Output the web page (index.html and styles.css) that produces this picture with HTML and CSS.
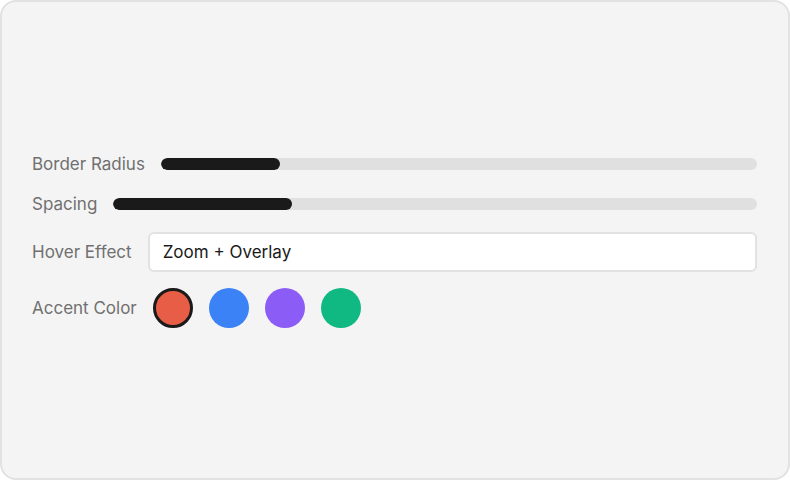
FILE: index.html
```html
<!DOCTYPE html>
<html>
<head>
<meta charset="utf-8">
<link rel="stylesheet" href="styles.css">
</head>
<body>
<div class="frame">
  <div class="panel">
    <div class="row">
      <span class="label">Border Radius</span>
      <div class="track"><div class="fill" style="width:20%"></div></div>
    </div>
    <div class="row">
      <span class="label">Spacing</span>
      <div class="track"><div class="fill" style="width:27.8%"></div></div>
    </div>
    <div class="row">
      <span class="label">Hover Effect</span>
      <div class="select">Zoom + Overlay</div>
    </div>
    <div class="row">
      <span class="label">Accent Color</span>
      <div class="swatches">
        <span class="swatch red selected"></span>
        <span class="swatch blue"></span>
        <span class="swatch purple"></span>
        <span class="swatch green"></span>
      </div>
    </div>
  </div>
</div>
</body>
</html>
```
FILE: styles.css
```css
* { box-sizing: border-box; }
html, body { margin: 0; padding: 0; }
body {
  width: 790px;
  height: 480px;
  font-family: "Inter", "Noto Sans", sans-serif;
  background: #ffffff;
}
.frame {
  width: 790px;
  height: 480px;
  background: #f4f4f4;
  border: 2px solid #e2e2e2;
  border-radius: 16px;
  padding: 0 31px 0 30px;
  display: flex;
  flex-direction: column;
  justify-content: center;
}
.panel {
  display: flex;
  flex-direction: column;
  gap: 16px;
}
.row {
  display: flex;
  align-items: center;
  gap: 16px;
}
.label {
  font-size: 17px;
  line-height: 24px;
  color: #707070;
  white-space: nowrap;
}
.track {
  flex: 1;
  height: 12px;
  border-radius: 6px;
  background: #e0e0e0;
  overflow: hidden;
}
.fill {
  height: 100%;
  background: #1a1a1a;
  border-radius: 6px;
}
.select {
  flex: 1;
  height: 40px;
  background: #ffffff;
  border: 2px solid #e2e2e2;
  border-radius: 6px;
  padding: 0 13px;
  display: flex;
  align-items: center;
  font-size: 17px;
  color: #1a1a1a;
}
.swatches {
  display: flex;
  gap: 16px;
}
.swatch {
  width: 40px;
  height: 40px;
  border-radius: 50%;
  display: block;
}
.swatch.selected { border: 3px solid #1a1a1a; }
.red { background: #e85d45; }
.blue { background: #3b82f6; }
.purple { background: #8b5cf6; }
.green { background: #10b981; }
```
